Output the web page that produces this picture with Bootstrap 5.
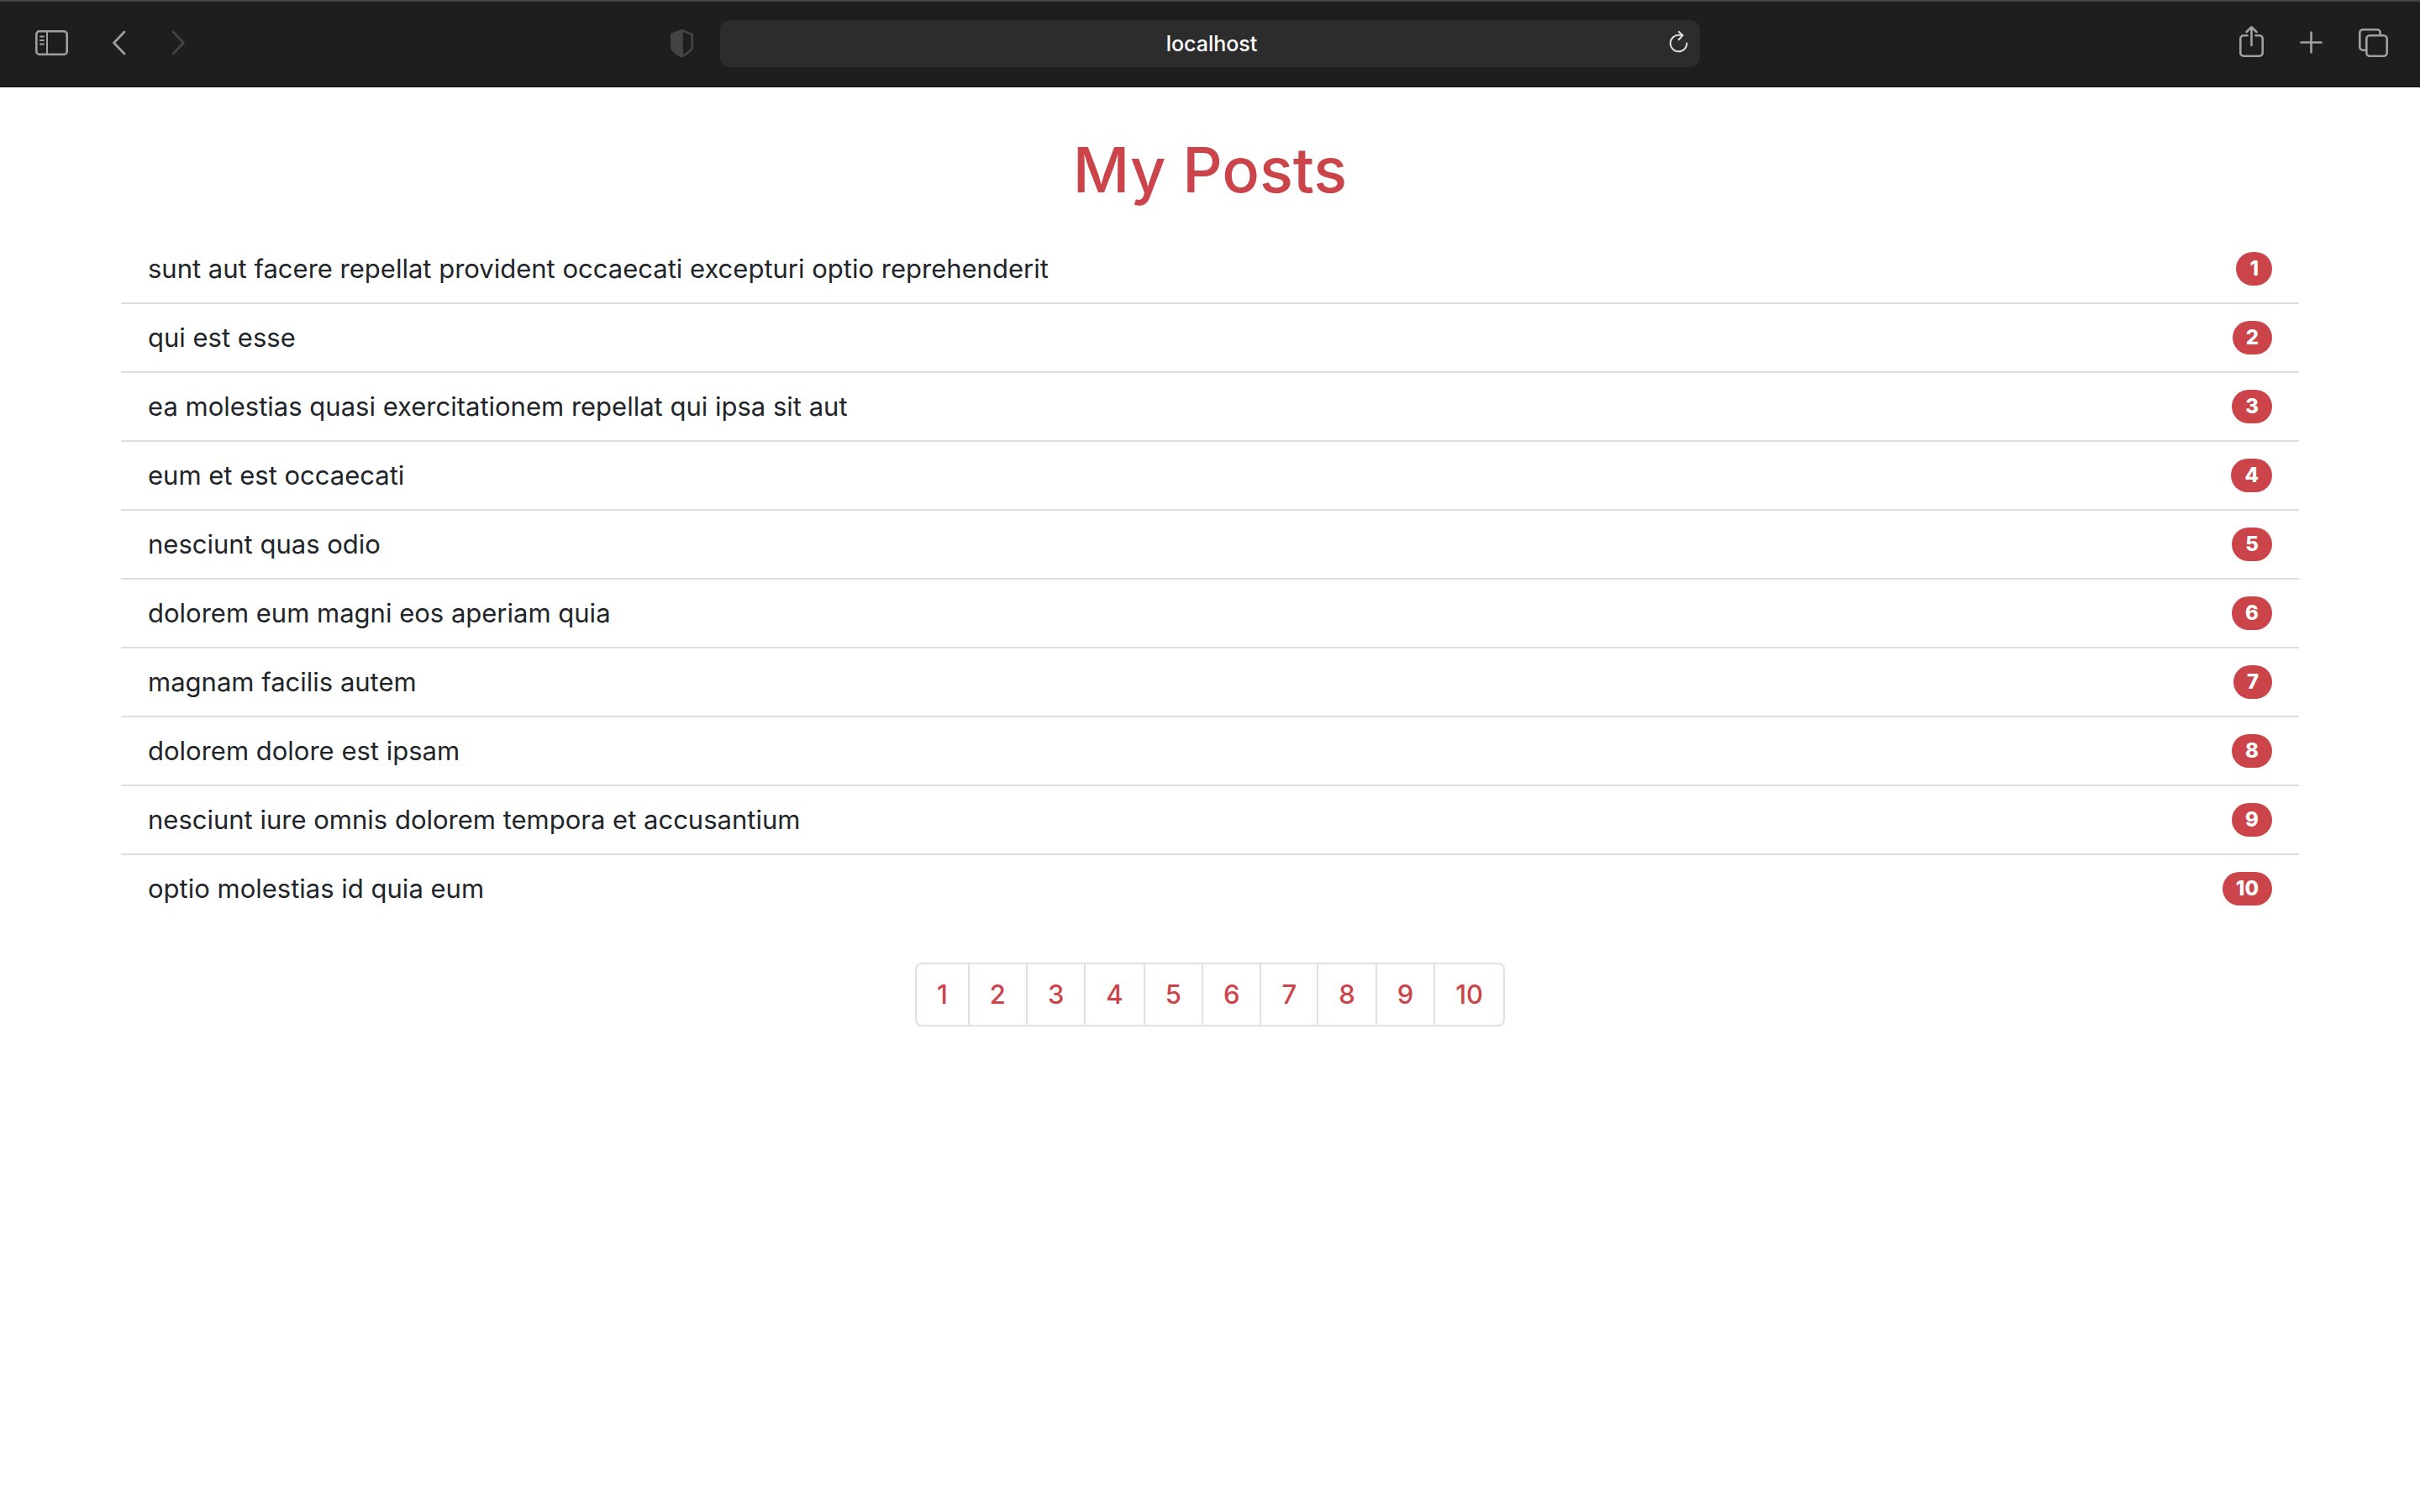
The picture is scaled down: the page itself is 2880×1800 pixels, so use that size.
<!DOCTYPE html>
<html lang="en">
<head>
<meta charset="utf-8">
<meta name="viewport" content="width=device-width, initial-scale=1">
<title>My Posts</title>
<link rel="stylesheet" href="https://cdn.jsdelivr.net/npm/bootstrap@5.3.0/dist/css/bootstrap.min.css">
<style>
  body { font-family: Inter, "Liberation Sans", sans-serif; font-size: 32px; line-height: 48px; background: #fff; color: #212529; }
  .browser-bar { display: grid; grid-template-columns: 1fr 40.5% 1fr; background: #1e1e1e; border-top: 2px solid #444; padding: 22px 0 24px; box-shadow: inset 0 -1px 0 #141214; }
  .bar-start { padding: 0 32px 0 42px; gap: 53px; }
  .bar-end { padding-right: 38px; gap: 43px; }
  .icon-btn { border: 0; padding: 0; background: none; color: #a0a0a0; display: flex; }
  .icon-btn.dim { color: #444; }
  .icon-btn svg { display: block; fill: none; stroke: currentColor; stroke-width: 2.6; stroke-linecap: round; stroke-linejoin: round; }
  .address { background: #2c2c2c; border-radius: 12px; height: 56px; padding: 0 14px 0 50px; }
  .address input { border: 0; background: none; color: #fff; font-size: 25px; font-weight: 500; text-align: center; min-width: 0; padding: 0; line-height: 32px; outline: 0; }
  .address .icon-btn { color: #dedede; margin-left: 10px; }
  .address .icon-btn svg { stroke-width: 2; }
  .posts { width: 90%; padding-top: 50px; }
  .posts h1 { font-size: 74px; line-height: 96px; color: #cb444a; margin-bottom: 30px; }
  .posts .list-group { --bs-list-group-item-padding-x: 32px; --bs-list-group-item-padding-y: 16px; --bs-list-group-border-color: #dfdfdf; --bs-list-group-color: #212529; font-size: 31px; }
  .posts .list-group-item { border-width: 0 0 2px; }
  .posts .badge { background: #cb444a; font-size: 24px; font-weight: 800; line-height: 24px; padding: 8px 16px; }
  .posts .pagination { --bs-pagination-color: #cb444a; --bs-pagination-border-color: #dee2e6; --bs-pagination-font-size: 31px; --bs-pagination-padding-x: 24px; --bs-pagination-padding-y: 12px; --bs-pagination-border-width: 2px; --bs-pagination-border-radius: 8px; font-weight: 500; margin: 48px 0; }
  .posts .page-item:not(:first-child) .page-link { margin-left: -2px; }
</style>
<script src="https://cdn.jsdelivr.net/npm/bootstrap@5.3.0/dist/js/bootstrap.bundle.min.js"></script>
</head>
<body>
<header class="browser-bar align-items-center">
  <div class="bar-start d-flex align-items-center">
    <button class="icon-btn" type="button" aria-label="Show sidebar">
      <svg width="39" height="48" viewBox="0 0 39 48"><rect x="1.3" y="9.3" width="36.4" height="27.4" rx="3.5"/><path d="M14 9.5v27M6 15.5h4M6 20h4M6 24.5h4" stroke-width="2"/></svg>
    </button>
    <button class="icon-btn" type="button" aria-label="Back">
      <svg width="17" height="48" viewBox="0 0 17 48"><path d="M14 10L1.500 23l12.500 13"/></svg>
    </button>
    <button class="icon-btn dim" type="button" aria-label="Forward" disabled>
      <svg width="17" height="48" viewBox="0 0 17 48"><path d="M2 10l12.500 13L2 36"/></svg>
    </button>
    <button class="icon-btn dim ms-auto" type="button" aria-label="Privacy report">
      <svg width="27" height="48" viewBox="0 0 27 48"><path d="M13.5 8.3L25.7 13v14.500c0 5-6 8.500-12.200 11.700C7.300 36 1.300 32.500 1.300 27.500V13z"/><path d="M13.500 8.300v30.900C7.300 36 1.300 32.500 1.300 27.500V13z" fill="currentColor"/></svg>
    </button>
  </div>
  <div class="address d-flex align-items-center">
    <input class="flex-grow-1" type="text" value="localhost" aria-label="Address">
    <button class="icon-btn" type="button" aria-label="Reload">
      <svg width="22" height="48" viewBox="0 0 22 48"><path d="M20.500 23.500a9.800 9.800 0 1 1-9.600-9.800h4.500M10.800 9.800l4.800 4.200-4.800 5.200"/></svg>
    </button>
  </div>
  <div class="bar-end d-flex align-items-center justify-content-end">
    <button class="icon-btn" type="button" aria-label="Share">
      <svg width="29" height="48" viewBox="0 0 29 48"><path d="M9.500 14.300H5a3.700 3.700 0 0 0-3.700 3.700v17A3.700 3.700 0 0 0 5 38.700h19a3.700 3.700 0 0 0 3.700-3.700V18a3.700 3.700 0 0 0-3.700-3.700h-4.500M14.500 26V4.500M8.500 10l6-5.700 6 5.700"/></svg>
    </button>
    <button class="icon-btn" type="button" aria-label="New tab">
      <svg width="27" height="48" viewBox="0 0 27 48"><path d="M1.500 22.500h24M13.500 10.500v24"/></svg>
    </button>
    <button class="icon-btn" type="button" aria-label="Tab overview">
      <svg width="35" height="48" viewBox="0 0 35 48"><rect x="9.300" y="14.300" width="24.400" height="24.400" rx="4"/><path d="M9 31.700H5A3.700 3.700 0 0 1 1.300 28V11A3.700 3.700 0 0 1 5 7.300h17a3.700 3.700 0 0 1 3.700 3.700v3"/></svg>
    </button>
  </div>
</header>
<main class="posts mx-auto">
  <h1 class="text-center fw-medium">My Posts</h1>
  <ul class="list-group list-group-flush">
    <li class="list-group-item d-flex justify-content-between align-items-center">sunt aut facere repellat provident occaecati excepturi optio reprehenderit<span class="badge rounded-pill">1</span></li>
    <li class="list-group-item d-flex justify-content-between align-items-center">qui est esse<span class="badge rounded-pill">2</span></li>
    <li class="list-group-item d-flex justify-content-between align-items-center">ea molestias quasi exercitationem repellat qui ipsa sit aut<span class="badge rounded-pill">3</span></li>
    <li class="list-group-item d-flex justify-content-between align-items-center">eum et est occaecati<span class="badge rounded-pill">4</span></li>
    <li class="list-group-item d-flex justify-content-between align-items-center">nesciunt quas odio<span class="badge rounded-pill">5</span></li>
    <li class="list-group-item d-flex justify-content-between align-items-center">dolorem eum magni eos aperiam quia<span class="badge rounded-pill">6</span></li>
    <li class="list-group-item d-flex justify-content-between align-items-center">magnam facilis autem<span class="badge rounded-pill">7</span></li>
    <li class="list-group-item d-flex justify-content-between align-items-center">dolorem dolore est ipsam<span class="badge rounded-pill">8</span></li>
    <li class="list-group-item d-flex justify-content-between align-items-center">nesciunt iure omnis dolorem tempora et accusantium<span class="badge rounded-pill">9</span></li>
    <li class="list-group-item d-flex justify-content-between align-items-center">optio molestias id quia eum<span class="badge rounded-pill">10</span></li>
  </ul>
  <nav aria-label="Posts pages">
    <ul class="pagination justify-content-center">
      <li class="page-item"><a class="page-link" href="#">1</a></li>
      <li class="page-item"><a class="page-link" href="#">2</a></li>
      <li class="page-item"><a class="page-link" href="#">3</a></li>
      <li class="page-item"><a class="page-link" href="#">4</a></li>
      <li class="page-item"><a class="page-link" href="#">5</a></li>
      <li class="page-item"><a class="page-link" href="#">6</a></li>
      <li class="page-item"><a class="page-link" href="#">7</a></li>
      <li class="page-item"><a class="page-link" href="#">8</a></li>
      <li class="page-item"><a class="page-link" href="#">9</a></li>
      <li class="page-item"><a class="page-link" href="#">10</a></li>
    </ul>
  </nav>
</main>
</body>
</html>
